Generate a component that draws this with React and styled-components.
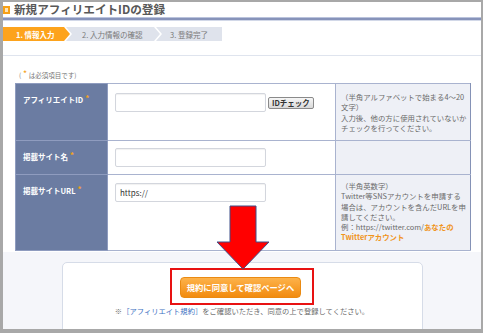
import React from "react";
import styled, { createGlobalStyle } from "styled-components";

const Global = createGlobalStyle`
  html, body { margin: 0; padding: 0; background: #fff; }
  body { font-family: "Noto Sans CJK JP", "Noto Sans", sans-serif; }
`;

const Frame = styled.div`
  position: relative;
  width: 483px;
  height: 333px;
  box-sizing: border-box;
  border-style: solid;
  border-color: #a8a8a8;
  border-width: 2px 2px 4px 3px;
  overflow: hidden;
  background: #fff;
`;

const TitleRow = styled.div`
  display: flex;
  align-items: flex-start;
  gap: 4px;
  height: 15px;
`;

const TitleIcon = styled.span`
  flex: none;
  width: 7px;
  height: 8px;
  box-sizing: border-box;
  border: 2px solid #f6a017;
  background: #ffe3b3;
  margin-top: 4px;
`;

const Title = styled.h1`
  margin: 0;
  font-size: 11.6px;
  line-height: 14px;
  font-weight: 700;
  color: #585858;
`;

const Rule = styled.div`
  height: 2px;
  background: #8793ba;
  border-top: 1px solid #bac3dc;
  border-bottom: 1px solid #d2d8e8;
`;

const Steps = styled.div`
  display: flex;
  height: 14px;
  margin-top: 6px;
`;

const clipFor = (kind) => {
  if (kind === "first")
    return "polygon(0 0, calc(100% - 6px) 0, 100% 50%, calc(100% - 6px) 100%, 0 100%)";
  if (kind === "last")
    return "polygon(0 0, 100% 0, 100% 100%, 0 100%, 6px 50%)";
  return "polygon(0 0, calc(100% - 6px) 0, 100% 50%, calc(100% - 6px) 100%, 0 100%, 6px 50%)";
};

const Step = styled.div`
  flex: none;
  box-sizing: border-box;
  width: ${(p) => p.$w}px;
  margin-left: ${(p) => (p.$kind === "first" ? 0 : -4)}px;
  padding-left: ${(p) => p.$pl}px;
  background: ${(p) => (p.$active ? "#fda31c" : "#dfe3ec")};
  color: ${(p) => (p.$active ? "#fff" : "#7a7a7a")};
  font-size: 7.5px;
  font-weight: ${(p) => (p.$active ? 700 : 400)};
  display: flex;
  align-items: center;
  white-space: nowrap;
  clip-path: ${(p) => clipFor(p.$kind)};
`;

const Panel = styled.div`
  margin-top: 14px;
  border-top: 1px solid #dfe4ee;
  padding-top: 14px;
`;

const Required = styled.div`
  padding-left: 16px;
  font-size: 6.5px;
  line-height: 10px;
  height: 10px;
  color: #777;
`;

const Star = styled.span`
  color: #f5a31a;
  font-weight: 700;
  font-size: ${(p) => p.$size || 8}px;
  position: relative;
  top: -2px;
  margin: 0 2px;
`;

const Table = styled.table`
  margin: 3px 0 0 12px;
  width: 456px;
  border-collapse: collapse;
  table-layout: fixed;
  border: 1px solid #8592b6;
`;

const Row = styled.tr`
  height: ${(p) => p.$h}px;
`;

const LabelCell = styled.td`
  width: 92px;
  box-sizing: border-box;
  background: #6b7ca2;
  border: 1px solid #8f9cbf;
  color: #fff;
  font-size: 7.5px;
  font-weight: 700;
  padding: 10px 7px 0;
  vertical-align: top;
  white-space: nowrap;
`;

const InputCell = styled.td`
  width: 228px;
  box-sizing: border-box;
  border-top: 1px solid #a9b3cf;
  border-bottom: 1px solid #a9b3cf;
  padding: ${(p) => p.$pt}px 7px 0;
  vertical-align: top;
  background: #fff;
`;

const NoteCell = styled.td`
  box-sizing: border-box;
  background: #eef0f6;
  border: 1px solid #a9b3cf;
  border-right-color: #8592b6;
  padding: ${(p) => p.$pt}px 4px 0 5px;
  vertical-align: top;
  font-size: 7.4px;
  line-height: 10.3px;
  color: #6a6a6a;
  white-space: nowrap;
`;

const InputLine = styled.div`
  display: flex;
  align-items: center;
  gap: 2px;
`;

const TextInput = styled.div`
  width: 151px;
  height: 19px;
  box-sizing: border-box;
  border: 1px solid #d3d6dd;
  border-radius: 2px;
  background: #fff;
  box-shadow: inset 0 1px 1px rgba(0, 0, 0, 0.06);
  font-size: 8px;
  color: #333;
  line-height: 17px;
  padding-left: 4px;
`;

const CheckButton = styled.span`
  height: 12px;
  box-sizing: border-box;
  padding: 0 3px;
  border: 1px solid #8a8a8a;
  border-radius: 2px;
  background: linear-gradient(#f6f6f6, #d9d9d9);
  font-size: 7.5px;
  font-weight: 700;
  color: #333;
  line-height: 10px;
  white-space: nowrap;
`;

const Orange = styled.span`
  color: #f0941c;
  font-weight: 700;
`;

const Bottom = styled.div`
  margin-top: 1px;
  padding-top: 10px;
  height: 120px;
  background: #f5f6fa;
`;

const Box = styled.div`
  width: 361px;
  margin: 0 auto;
  height: 90px;
  box-sizing: border-box;
  border: 1px solid #d6dce8;
  border-radius: 5px;
  background: #fff;
  padding-top: 5px;
  text-align: center;
`;

const Highlight = styled.div`
  display: inline-block;
  border: 2px solid #e81212;
  padding: 7px 11px 5px 8px;
`;

const SubmitButton = styled.div`
  width: 121px;
  height: 21px;
  box-sizing: border-box;
  border: 1px solid #ea8a12;
  border-radius: 4px;
  background: linear-gradient(#fdb24a, #f28b0f);
  color: #fff;
  font-size: 8.3px;
  font-weight: 700;
  line-height: 19px;
  text-align: center;
  white-space: nowrap;
`;

const Caption = styled.div`
  margin-top: 1px;
  font-size: 7.3px;
  line-height: 10px;
  color: #6a6a6a;
  white-space: nowrap;
`;

const Link = styled.span`
  color: #3b6fc2;
`;

const Arrow = styled.svg`
  position: absolute;
  left: 213px;
  top: 203px;
  width: 54px;
  height: 66px;
  overflow: visible;
`;

export default function App() {
  return (
    <>
      <Global />
      <Frame>
        <TitleRow>
          <TitleIcon />
          <Title>新規アフィリエイトIDの登録</Title>
        </TitleRow>
        <Rule />
        <Steps>
          <Step $kind="first" $w={67} $pl={13} $active>
            1. 情報入力
          </Step>
          <Step $kind="mid" $w={94} $pl={16}>
            2. 入力情報の確認
          </Step>
          <Step $kind="last" $w={66} $pl={14}>
            3. 登録完了
          </Step>
        </Steps>
        <Panel>
          <Required>
            (<Star $size={7}>*</Star>は必須項目です)
          </Required>
          <Table>
            <tbody>
              <Row $h={57}>
                <LabelCell>
                  アフィリエイトID<Star>*</Star>
                </LabelCell>
                <InputCell $pt={9}>
                  <InputLine>
                    <TextInput />
                    <CheckButton>IDチェック</CheckButton>
                  </InputLine>
                </InputCell>
                <NoteCell $pt={8}>
                  （半角アルファベットで始まる4～20
                  <br />
                  文字）
                  <br />
                  入力後、他の方に使用されていないか
                  <br />
                  チェックを行ってください。
                </NoteCell>
              </Row>
              <Row $h={34}>
                <LabelCell>
                  掲載サイト名<Star>*</Star>
                </LabelCell>
                <InputCell $pt={7}>
                  <TextInput />
                </InputCell>
                <NoteCell $pt={7} />
              </Row>
              <Row $h={76}>
                <LabelCell>
                  掲載サイトURL<Star>*</Star>
                </LabelCell>
                <InputCell $pt={8}>
                  <TextInput>https://</TextInput>
                </InputCell>
                <NoteCell $pt={6}>
                  （半角英数字）
                  <br />
                  Twitter等SNSアカウントを申請する
                  <br />
                  場合は、アカウントを含んだURLを申
                  <br />
                  請してください。
                  <br />
                  例：https://twitter.com/<Orange>あなたの</Orange>
                  <br />
                  <Orange>Twitterアカウント</Orange>
                </NoteCell>
              </Row>
            </tbody>
          </Table>
          <Bottom>
            <Box>
              <Highlight>
                <SubmitButton>規約に同意して確認ページへ</SubmitButton>
              </Highlight>
              <Caption>
                ※<Link>［アフィリエイト規約］</Link>をご確認いただき、同意の上で登録してください。
              </Caption>
            </Box>
          </Bottom>
        </Panel>
        <Arrow viewBox="0 0 54 66">
          <polygon
            points="14,1 40,1 40,37 53,37 27,64 1,37 14,37"
            fill="#ff0000"
            stroke="#3d4f88"
            strokeWidth="1"
            strokeLinejoin="miter"
          />
        </Arrow>
      </Frame>
    </>
  );
}
